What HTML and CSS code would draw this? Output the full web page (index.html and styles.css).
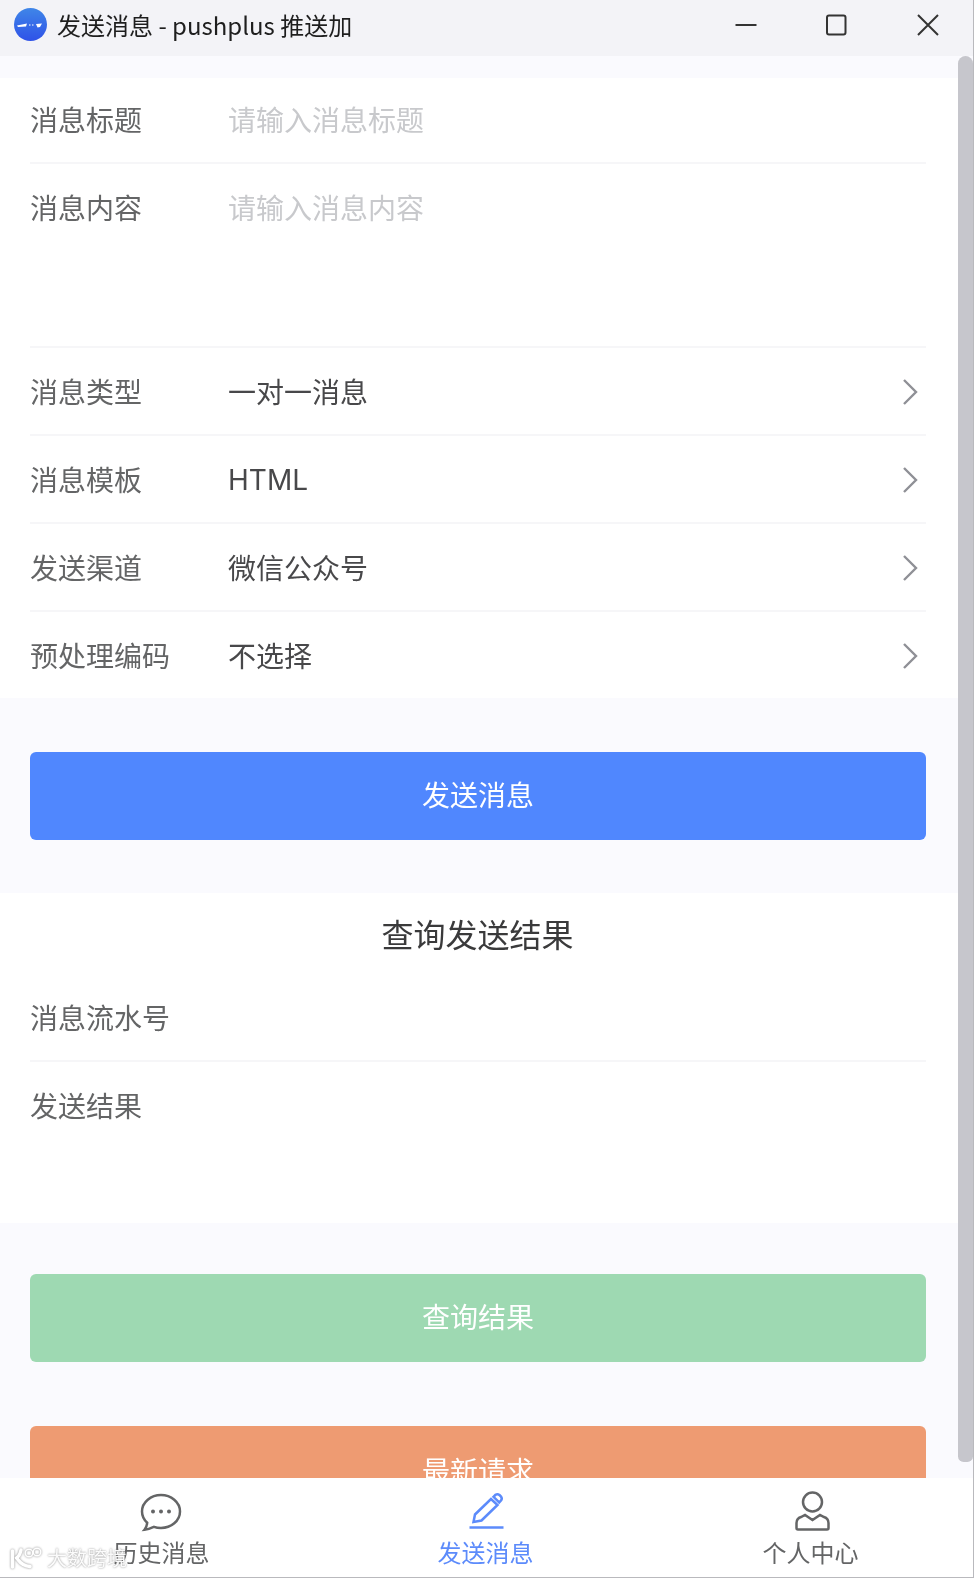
FILE: index.html
```html
<!DOCTYPE html>
<html lang="zh-CN">
<head>
<meta charset="utf-8">
<title>发送消息 - pushplus 推送加</title>
<link rel="stylesheet" href="styles.css">
</head>
<body>
<div class="window">
  <header class="titlebar">
    <svg class="app-logo" viewBox="0 0 33 33" aria-hidden="true">
      <defs><linearGradient id="lg" x1="0" y1="0" x2="0" y2="1"><stop offset="0" stop-color="#3f86e8"/><stop offset="1" stop-color="#2f52e8"/></linearGradient></defs>
      <circle cx="16.5" cy="16.5" r="16.5" fill="url(#lg)"/>
      <path d="M3 17.500 L13 15.500 L12 18.500 L4 19 Z" fill="#fff"/>
      <path d="M22 16 L28 15.500 L26 19 L23.500 19.500 Z" fill="#fff"/>
      <path d="M15 17 h1.500 M18 17 h1.500" stroke="#fff" stroke-width="1"/>
    </svg>
    <span class="win-title">发送消息 - pushplus 推送加</span>
    <div class="win-controls">
      <svg class="win-btn" viewBox="0 0 24 24" aria-hidden="true"><path d="M1.500 12H22.500"/></svg>
      <svg class="win-btn" viewBox="0 0 24 24" aria-hidden="true"><rect x="2" y="2.500" width="18.500" height="19" rx="2"/></svg>
      <svg class="win-btn" viewBox="0 0 24 24" aria-hidden="true"><path d="M2 2L22 22M22 2L2 22"/></svg>
    </div>
  </header>

  <div class="body-wrap">
    <main class="content">
      <section class="group first">
        <div class="cell top"><span class="label">消息标题</span><span class="value placeholder">请输入消息标题</span></div>
        <div class="cell tall-a"><span class="label">消息内容</span><span class="value placeholder">请输入消息内容</span></div>
        <div class="cell link"><span class="label">消息类型</span><span class="value">一对一消息</span><svg class="chev" viewBox="0 0 16 28" aria-hidden="true"><path d="M2 2L14 14L2 26"/></svg></div>
        <div class="cell link"><span class="label">消息模板</span><span class="value"><span class="latin">HTML</span></span><svg class="chev" viewBox="0 0 16 28" aria-hidden="true"><path d="M2 2L14 14L2 26"/></svg></div>
        <div class="cell link"><span class="label">发送渠道</span><span class="value">微信公众号</span><svg class="chev" viewBox="0 0 16 28" aria-hidden="true"><path d="M2 2L14 14L2 26"/></svg></div>
        <div class="cell link last"><span class="label">预处理编码</span><span class="value">不选择</span><svg class="chev" viewBox="0 0 16 28" aria-hidden="true"><path d="M2 2L14 14L2 26"/></svg></div>
      </section>

      <div class="btn-wrap"><button class="btn blue">发送消息</button></div>

      <section class="group">
        <h2 class="section-title">查询发送结果</h2>
        <div class="cell"><span class="label">消息流水号</span></div>
        <div class="cell tall-b last"><span class="label">发送结果</span></div>
      </section>

      <div class="btn-wrap tight"><button class="btn green">查询结果</button></div>
      <div class="btn-wrap tight-top"><button class="btn orange">最新请求</button></div>
    </main>
    <div class="scrollbar"></div>
  </div>

  <nav class="tabbar">
    <div class="tab">
      <svg class="tab-icon" viewBox="0 0 44 44" aria-hidden="true">
        <path d="M21 5C31 5 40 12 40 21.500C40 31 31 38 21 38C18.500 38 16 37.600 14 36.800C11.500 38 8.500 39.500 4.500 39.800C6.500 37.500 7 35 7.200 32.700C4 29.800 2 26 2 21.500C2 12 11 5 21 5Z"/>
        <circle class="dot" cx="13" cy="21.500" r="2"/><circle class="dot" cx="21" cy="21.500" r="2"/><circle class="dot" cx="29" cy="21.500" r="2"/>
      </svg>
      <span>历史消息</span>
    </div>
    <div class="tab active">
      <svg class="tab-icon" viewBox="0 0 44 44" aria-hidden="true">
        <path d="M9.500 32L11 24.500L27 9L33.500 15L17.500 30.500Z"/>
        <path d="M29.500 6.800L31.500 4.800Q33.500 3.500 35.500 5L37 6.500Q38.500 8.500 37 10.500L35.200 12.500Z"/>
        <path d="M5.500 37.500H39.500"/>
      </svg>
      <span>发送消息</span>
    </div>
    <div class="tab">
      <svg class="tab-icon user" viewBox="0 0 44 44" aria-hidden="true">
        <circle cx="23.500" cy="12" r="9.500"/>
        <path d="M9 39.500C8 39.500 7.500 39 7.500 38V33C7.500 29.500 9 28 12 27L16 25L23.500 30L31 25L35 27C38 28 39.500 29.500 39.500 33V38C39.500 39 39 39.500 38 39.500Z"/>
      </svg>
      <span>个人中心</span>
    </div>
    <div class="watermark">
      <svg class="wm-logo" viewBox="0 0 36 26" aria-hidden="true">
        <path class="wm-k" d="M3.500 6V22M12 5C11 10 9 12 7.500 13C10 15 11 21 21 21.500"/>
        <circle cx="20" cy="8" r="3.800"/><circle cx="28" cy="7" r="3.800"/>
      </svg>
      <span>大数跨境</span>
    </div>
  </nav>
</div>
</body>
</html>
```

FILE: styles.css
```css
* { box-sizing: border-box; }

html, body {
  margin: 0;
  padding: 0;
  height: 100%;
  overflow: hidden;
}

body {
  font-family: "Noto Sans CJK SC", "Noto Sans", sans-serif;
  background: #fafafe;
  color: #323233;
}

.window {
  width: 974px;
  height: 1578px;
  display: flex;
  flex-direction: column;
  border-right: 1px solid #b9b9bd;
  border-bottom: 1px solid #b9b9bd;
  filter: blur(0.45px);
}

.titlebar {
  flex: 0 0 56px;
  display: flex;
  align-items: center;
  background: #f3f3f7;
  padding: 0 0 7px 14px;
}

.app-logo { width: 33px; height: 33px; margin-right: 10px; flex: none; }

.win-title { font-size: 24px; line-height: 32px; color: #1e1e1e; white-space: nowrap; }

.win-controls {
  margin-left: auto;
  display: flex;
  align-items: center;
  gap: 67px;
  padding-right: 33px;
}

.win-btn {
  width: 24px;
  height: 24px;
  fill: none;
  stroke: #333;
  stroke-width: 2;
}

.body-wrap {
  flex: 1 1 0;
  min-height: 0;
  display: flex;
  background: #fafafe;
  overflow: hidden;
}

.content {
  flex: 1 1 0;
  min-width: 0;
  padding-top: 22px;
}

.group { background: #fff; }

.cell {
  height: 88px;
  margin-left: 30px;
  margin-right: 32px;
  display: flex;
  align-items: center;
  border-bottom: 2px solid #f6f6f8;
  font-size: 28px;
  line-height: 40px;
}

.cell.top { height: 86px; padding-bottom: 2px; }
.cell.last { border-bottom: 0; }
.cell.link.last { height: 86px; }
.cell.tall-a { height: 184px; align-items: flex-start; padding-top: 23px; }
.cell.tall-b { height: 161px; align-items: flex-start; padding-top: 23px; }

.label { flex: 0 0 198px; color: #646566; white-space: nowrap; }
.value { flex: 1 1 0; color: #48484a; white-space: nowrap; }
.latin { font-family: Inter, sans-serif; }
.placeholder { color: #c8c9cc; }

.chev {
  width: 16px;
  height: 28px;
  margin-right: 8px;
  margin-top: 2px;
  flex: none;
  fill: none;
  stroke: #8f9096;
  stroke-width: 2.400;
}

.btn-wrap { padding: 54px 32px 53px 30px; }
.btn-wrap.tight { padding: 51px 32px 0 30px; }
.btn-wrap.tight-top { padding: 64px 32px 0 30px; }

.btn {
  display: block;
  width: 100%;
  height: 88px;
  border: 0;
  border-radius: 6px;
  font-family: inherit;
  font-size: 28px;
  color: #fff;
  padding: 0 0 4px;
}

.btn.blue { background: #5087fe; }
.btn.green { background: #9ed9b2; }
.btn.orange { background: #ee9b72; padding: 0; }

.section-title {
  margin: 0;
  height: 81px;
  display: flex;
  align-items: center;
  justify-content: center;
  font-size: 32px;
  font-weight: 400;
  color: #3a3a3b;
  padding-right: 3px;
  padding-bottom: 2px;
}

.scrollbar {
  flex: none;
  width: 15px;
  margin-bottom: 16px;
  background: #c6c6cc;
  border-radius: 8px 8px 6px 6px;
}

.tabbar {
  position: relative;
  flex: 0 0 99px;
  display: flex;
  background: #fff;
}

.tab {
  flex: 0 0 325px;
  display: flex;
  flex-direction: column;
  align-items: center;
  font-size: 24px;
  line-height: 30px;
  color: #646566;
  padding-top: 12px;
}

.tab:first-child { flex-basis: 323px; }
.tab.active { color: #5c8bfb; }

.tab-icon {
  width: 44px;
  height: 44px;
  margin-bottom: 3px;
  fill: none;
  stroke: #646566;
  stroke-width: 2.500;
  flex: none;
}

.tab.active .tab-icon { stroke: #5c8bfb; }
.tab-icon .dot { fill: #646566; stroke: none; }

.watermark {
  position: absolute;
  left: 9px;
  top: 67px;
  display: flex;
  align-items: center;
  gap: 2px;
  font-size: 20px;
  line-height: 26px;
  color: rgba(255, 255, 255, 0.95);
  text-shadow: 0 0 2px rgba(120, 120, 120, 0.9);
}

.wm-logo {
  width: 36px;
  height: 26px;
  fill: none;
  stroke: #fff;
  stroke-width: 1.400;
  filter: drop-shadow(0 0 1px #888);
}

.wm-logo .wm-k { stroke-width: 3.500; stroke-linecap: round; stroke-linejoin: round; }
```
